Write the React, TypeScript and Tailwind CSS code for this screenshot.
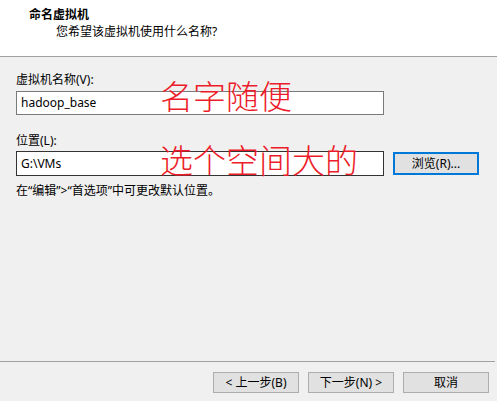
import React from "react";

const ui = { fontFamily: '"Noto Sans", "Noto Sans CJK SC", sans-serif' };
const cjk = { fontFamily: '"Noto Sans CJK SC", sans-serif' };

const WizardButton: React.FC<{ children: React.ReactNode; focused?: boolean }> = ({
  children,
  focused,
}) => (
  <button
    className={
      focused
        ? "w-[86px] h-[23px] bg-[#e1e1e1] border-2 border-[#0078d7] text-[12px] leading-none text-black"
        : "w-[86px] h-[21px] bg-[#e1e1e1] border border-[#adadad] text-[12px] leading-none text-black"
    }
    style={ui}
  >
    {children}
  </button>
);

export default function App() {
  return (
    <div
      className="w-[497px] h-[401px] bg-[#f0f0f0] flex flex-col text-black overflow-hidden"
      style={ui}
    >
      {/* Header */}
      <div className="h-[57px] bg-white border-b border-[#a0a0a0] pl-[29px] pt-[7px]">
        <div className="text-[12px] leading-[16px] font-bold">命名虚拟机</div>
        <div className="text-[12px] leading-[16px] pl-[27px] pt-[1px]">
          您希望该虚拟机使用什么名称?
        </div>
      </div>

      {/* Body */}
      <div className="relative flex-1 pl-[16px] pt-[15px]">
        <div className="text-[12px] leading-[16px]">虚拟机名称(V):</div>
        <div className="mt-[3px] w-[368px] h-[24px] bg-white border border-[#7a7a7a] flex items-center pl-[4px] text-[12px]">
          hadoop_base
        </div>

        <div className="mt-[18px] text-[12px] leading-[16px]">位置(L):</div>
        <div className="mt-[2px] flex items-center gap-[9px]">
          <div className="w-[368px] h-[25px] bg-white border border-[#333333] flex items-center pl-[4px] text-[12px]">
            G:\VMs
          </div>
          <WizardButton focused>浏览(R)...</WizardButton>
        </div>
        <div className="mt-[7px] text-[12px] leading-[16px]">
          在“编辑”&gt;“首选项”中可更改默认位置。
        </div>

        {/* handwritten-style annotations laid over the inputs */}
        <div
          className="absolute left-[160px] top-[18px] text-[33px] leading-[40px] font-light text-[#ec1c2a]"
          style={cjk}
        >
          名字随便
        </div>
        <div
          className="absolute left-[160px] top-[82px] text-[33px] leading-[40px] font-light text-[#ec1c2a]"
          style={cjk}
        >
          选个空间大的
        </div>
      </div>

      {/* Footer */}
      <div className="border-t border-[#a0a0a0] mr-[2px] h-[40px] flex items-start justify-end gap-[9px] pt-[10px] pr-[6px]">
        <WizardButton>&lt; 上一步(B)</WizardButton>
        <WizardButton>下一步(N) &gt;</WizardButton>
        <WizardButton>取消</WizardButton>
      </div>
    </div>
  );
}
